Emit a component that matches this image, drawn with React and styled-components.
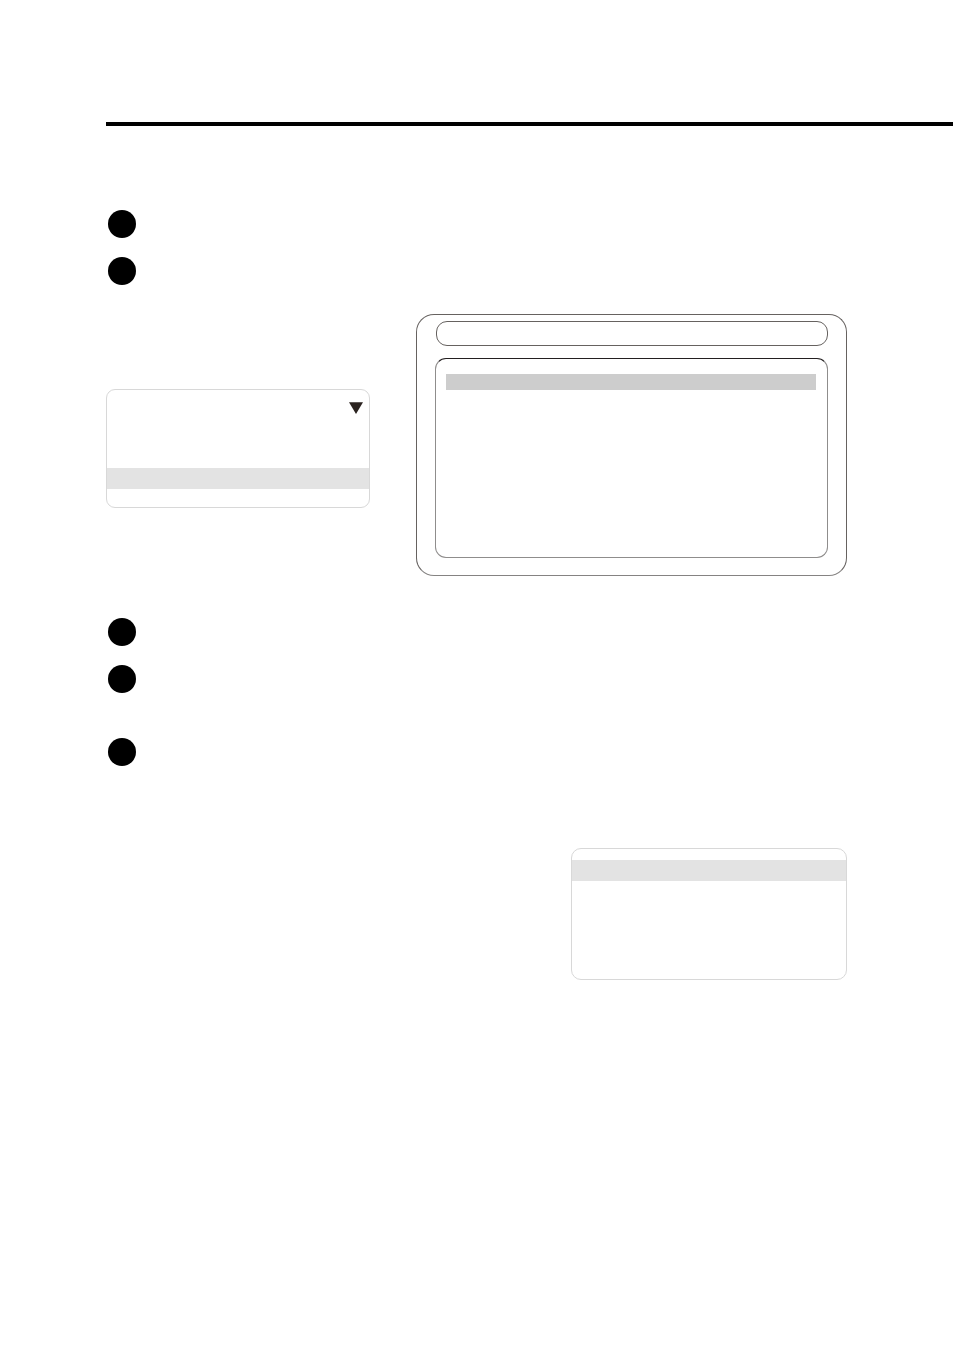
import styled, { createGlobalStyle } from "styled-components";

//styles
const GlobalStyle = createGlobalStyle`
  * {
    box-sizing: border-box;
  }
  body {
    margin: 0;
    background-color: #fff;
    font-family: "Liberation Sans", Arial, sans-serif;
  }
`;
const Page = styled.main`
  min-height: 100vh;
  padding: 122px 0 40px 106px;
`;
const Rule = styled.hr`
  height: 4px;
  margin: 0;
  border: 0;
  background-color: #000;
`;
const Content = styled.div`
  display: flex;
  flex-direction: column;
  margin-right: 106px;
  padding-top: 84px;
`;
const Steps = styled.ol`
  display: flex;
  flex-direction: column;
  gap: 19px;
  margin: 0;
  padding: 0 2px;
  list-style: none;
`;
const Step = styled.li`
  min-height: ${(props) => (props.$tall ? "54px" : "28px")};
`;
const Bullet = styled.span`
  display: block;
  width: 28px;
  height: 28px;
  border-radius: 50%;
  background-color: #000;
`;
const Figures = styled.div`
  display: flex;
  align-items: flex-start;
  gap: 46px;
  margin: 29px 0 42px;
`;
const LcdColumn = styled.div`
  flex: none;
  width: 264px;
  padding-top: 75px;
`;
const Lcd = styled.div`
  height: 119px;
  padding-top: 12px;
  border: 1px solid #d8d8d8;
  border-radius: 9px;
`;
const LcdTop = styled.div`
  display: flex;
  justify-content: flex-end;
  height: 66px;
  padding-right: 6px;
`;
const LcdRow = styled.div`
  height: 21px;
  background-color: #e3e3e3;
`;
const MenuLcd = styled(Lcd)`
  align-self: flex-end;
  width: 276px;
  height: 132px;
  margin-top: 82px;
  padding-top: 11px;
  border-radius: 10px;
`;
const Screen = styled.div`
  flex: 1;
  display: flex;
  flex-direction: column;
  gap: 12px;
  height: 262px;
  padding: 6px 18px 17px;
  border: 1px solid #666260;
  border-bottom-color: #858382;
  border-radius: 18px;
`;
const TitleBar = styled.div`
  height: 25px;
  margin-left: 1px;
  border: 1px solid #666260;
  border-radius: 11px;
`;
const ListBox = styled.div`
  flex: 1;
  padding: 15px 11px 0 10px;
  border: 1px solid #8f8d8c;
  border-top-color: #231f20;
  border-radius: 11px;
`;
const Selected = styled.div`
  height: 16px;
  background-color: #cdcdcd;
`;

const DownArrow = () => (
  <svg width="14" height="12" viewBox="0 0 14 12" aria-hidden="true">
    <path d="M0 0.3H14L7 12Z" fill="#2b2320" />
  </svg>
);

export default function App() {
  return (
    <>
      <GlobalStyle />
      <Page>
        <Rule />
        <Content>
          <Steps>
            <Step>
              <Bullet />
            </Step>
            <Step>
              <Bullet />
            </Step>
          </Steps>
          <Figures>
            <LcdColumn>
              <Lcd>
                <LcdTop>
                  <DownArrow />
                </LcdTop>
                <LcdRow />
              </Lcd>
            </LcdColumn>
            <Screen>
              <TitleBar />
              <ListBox>
                <Selected />
              </ListBox>
            </Screen>
          </Figures>
          <Steps>
            <Step>
              <Bullet />
            </Step>
            <Step $tall>
              <Bullet />
            </Step>
            <Step>
              <Bullet />
            </Step>
          </Steps>
          <MenuLcd>
            <LcdRow />
          </MenuLcd>
        </Content>
      </Page>
    </>
  );
}
